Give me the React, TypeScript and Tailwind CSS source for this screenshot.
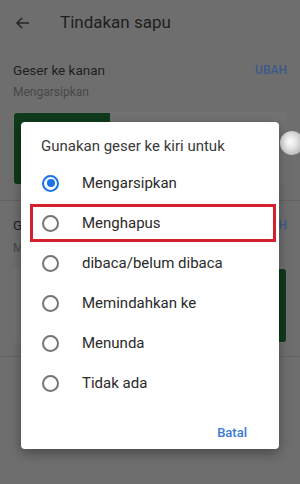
import React from 'react'

const options = [
  'Mengarsipkan',
  'Menghapus',
  'dibaca/belum dibaca',
  'Memindahkan ke',
  'Menunda',
  'Tidak ada',
]

function Radio({ checked }: { checked: boolean }) {
  return (
    <span
      className={
        'flex h-[17px] w-[17px] items-center justify-center rounded-full border-2 ' +
        (checked ? 'border-[#1a73e8]' : 'border-[#757575]')
      }
    >
      {checked && <span className="h-[8px] w-[8px] rounded-full bg-[#1a73e8]" />}
    </span>
  )
}

export default function App() {
  return (
    <div
      className="relative h-[484px] w-[300px] overflow-hidden bg-[#6e6e6e]"
      style={{ fontFamily: 'Roboto, "Noto Sans", sans-serif' }}
    >
      {/* page behind the dim */}
      <div className="flex h-[46px] items-center">
        <svg className="ml-[14px]" width="18" height="18" viewBox="0 0 24 24" fill="none">
          <path d="M20 12H5M11 5l-7 7 7 7" stroke="#262626" strokeWidth="2" />
        </svg>
        <span className="ml-[28px] text-[17px] text-[#1e1e1e]">Tindakan sapu</span>
      </div>

      <div className="px-[13px] pt-[14px]">
        <div className="flex items-center justify-between">
          <span className="text-[13.5px] text-[#1e1e1e]">Geser ke kanan</span>
          <span className="text-[12px] font-medium text-[#3d5a8a]">UBAH</span>
        </div>
        <div className="mt-[3px] text-[12px] text-[#484848]">Mengarsipkan</div>
        <div className="mt-[11px] flex h-[73px] rounded-[3px] border border-[#727272]">
          <div className="w-[96px] rounded-l-[3px] bg-[#0f3a1b]" />
          <div className="flex-1 bg-[#727272]" />
        </div>
      </div>
      <div className="mt-[15px] h-px bg-[#636363]" />

      <div className="px-[13px] pt-[14px]">
        <div className="flex items-center justify-between">
          <span className="text-[13.5px] text-[#1e1e1e]">Geser ke kiri</span>
          <span className="text-[12px] font-medium text-[#3d5a8a]">UBAH</span>
        </div>
        <div className="mt-[3px] text-[12px] text-[#484848]">Menghapus</div>
        <div className="mt-[11px] flex h-[75px] rounded-[3px] border border-[#727272]">
          <div className="flex-1 bg-[#727272]" />
          <div className="w-[96px] rounded-r-[3px] bg-[#0f3a1b]" />
        </div>
      </div>
      <div className="mt-[13px] h-px bg-[#636363]" />

      {/* touch indicator */}
      <div className="absolute left-[280px] top-[131px] h-[24px] w-[24px] rounded-full bg-[radial-gradient(circle_at_40%_45%,#ffffff_0%,#e4e4e4_35%,#9a9a9a_100%)]" />

      {/* dialog */}
      <div className="absolute left-[21px] top-[122px] h-[327px] w-[258px] rounded-[4px] bg-white shadow-[0_4px_12px_rgba(0,0,0,0.35)]">
        <div className="pl-[20px] pt-[14px] text-[15px] leading-[20px] text-[#3a3a3a]">
          Gunakan geser ke kiri untuk
        </div>
        <div className="mt-[7px]">
          {options.map((o, i) => (
            <div key={o} className="relative flex h-[40px] items-center">
              {i === 1 && (
                <div className="absolute left-[9px] top-[1px] h-[38px] w-[246px] border-[3px] border-[#d61f2c]" />
              )}
              <span className="ml-[21px]">
                <Radio checked={i === 0} />
              </span>
              <span className="ml-[23px] text-[15px] text-[#2a2a2a]">{o}</span>
            </div>
          ))}
        </div>
        <div className="flex justify-end pr-[32px] pt-[20px]">
          <span className="text-[13px] font-medium text-[#3b7ad4]">Batal</span>
        </div>
      </div>
    </div>
  )
}
